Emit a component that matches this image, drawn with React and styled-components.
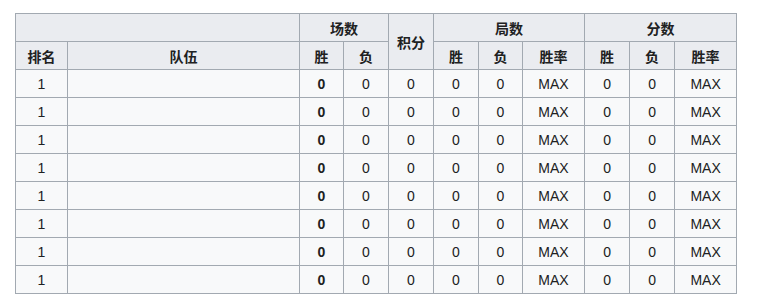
import React from "react";
import styled, { createGlobalStyle } from "styled-components";

const GlobalStyle = createGlobalStyle`
  html, body {
    margin: 0;
    background: #ffffff;
  }
  body {
    font-family: "Liberation Sans", Arial, "Noto Sans CJK SC", sans-serif;
    color: #202122;
  }
`;

const Page = styled.div`
  padding: 13px 0 0 15px;
`;

const Table = styled.table`
  border-collapse: collapse;
  table-layout: fixed;
  width: 722px;
  background: #f8f9fa;
  border: 1px solid #a2a9b1;
  font-size: 14px;
`;

const Th = styled.th`
  background: #eaecf0;
  border: 1px solid #a2a9b1;
  height: 27px;
  padding: 0 6px;
  font-weight: bold;
  font-size: 14px;
  text-align: center;
  font-family: "Noto Sans CJK SC", "Liberation Sans", sans-serif;
`;

const Td = styled.td`
  border: 1px solid #a2a9b1;
  height: 27px;
  padding: 0 6px;
  text-align: center;
  font-weight: ${(p) => (p.$bold ? "bold" : "normal")};
`;

const widths = [52, 232, 44, 45, 45, 45, 44, 62, 45, 45, 62];

const rows = Array.from({ length: 8 }, () => ({
  rank: 1,
  team: "",
  win: 0,
  lose: 0,
  points: 0,
  gWin: 0,
  gLose: 0,
  gRate: "MAX",
  sWin: 0,
  sLose: 0,
  sRate: "MAX",
}));

export default function App() {
  return (
    <Page>
      <GlobalStyle />
      <Table>
        <colgroup>
          {widths.map((w, i) => (
            <col key={i} style={{ width: w }} />
          ))}
        </colgroup>
        <thead>
          <tr>
            <Th colSpan={2}></Th>
            <Th colSpan={2}>场数</Th>
            <Th rowSpan={2}>积分</Th>
            <Th colSpan={3}>局数</Th>
            <Th colSpan={3}>分数</Th>
          </tr>
          <tr>
            <Th>排名</Th>
            <Th>队伍</Th>
            <Th>胜</Th>
            <Th>负</Th>
            <Th>胜</Th>
            <Th>负</Th>
            <Th>胜率</Th>
            <Th>胜</Th>
            <Th>负</Th>
            <Th>胜率</Th>
          </tr>
        </thead>
        <tbody>
          {rows.map((r, i) => (
            <tr key={i}>
              <Td>{r.rank}</Td>
              <Td>{r.team}</Td>
              <Td $bold>{r.win}</Td>
              <Td>{r.lose}</Td>
              <Td>{r.points}</Td>
              <Td>{r.gWin}</Td>
              <Td>{r.gLose}</Td>
              <Td>{r.gRate}</Td>
              <Td>{r.sWin}</Td>
              <Td>{r.sLose}</Td>
              <Td>{r.sRate}</Td>
            </tr>
          ))}
        </tbody>
      </Table>
    </Page>
  );
}
